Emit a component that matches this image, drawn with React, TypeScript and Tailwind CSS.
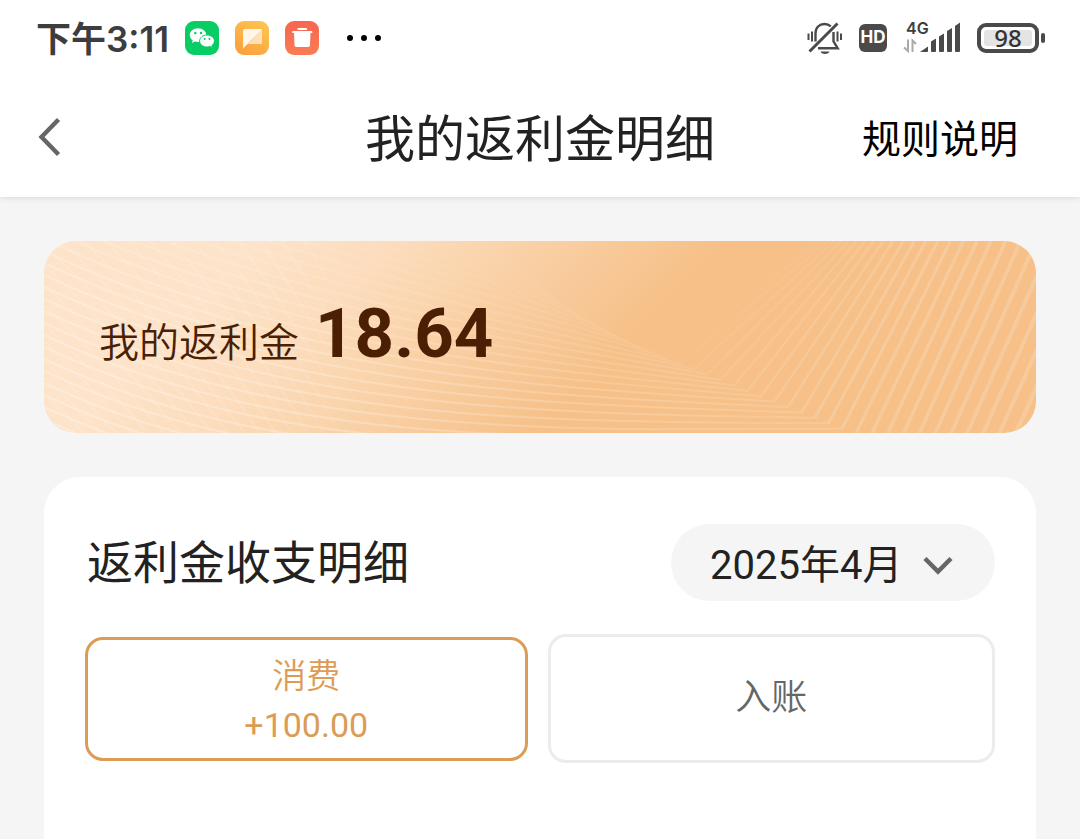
import React, { useState } from "react";

const CARD_W = 992;
const CARD_H = 192;

type Ray = { fan: string; sweep: string; strength: number; fade: number };

const rays: Ray[] = Array.from({ length: 40 }, (_, i) => {
  const k = i - 8;
  const vx = 609 + 13.5 * k;
  const vy = 112 + 5.4 * k;
  const topX = 773 + 5.02 * k + 0.258 * k * k;
  const leftY = 70 + 12 * (k - 13);
  const midY = 181 + 9 * (k - 13);
  return {
    fan: k >= 0 ? `M${vx} ${vy}L${topX} 0` : "",
    sweep: `M${vx} ${vy}C${496} ${midY} ${236} ${leftY + 112} 0 ${leftY}`,
    strength: Math.max(0.03, Math.min(0.17, 0.04 + k * 0.01)),
    fade: Math.max(0.15, Math.min(1, 0.4 + k * 0.06)),
  };
});

const crossings: string[] = Array.from({ length: 22 }, (_, j) => {
  const x = -180 + j * 22;
  return `M${x} 0Q${x + 110 - j * 3} 80 ${x + 220 - j * 6} 192`;
});

function CardPattern() {
  return (
    <svg
      className="absolute inset-0 h-full w-full"
      viewBox={`0 0 ${CARD_W} ${CARD_H}`}
      preserveAspectRatio="none"
      aria-hidden="true"
    >
      <defs>
        <linearGradient id="base" gradientUnits="userSpaceOnUse" x1="110" y1="110" x2="343" y2="343">
          <stop offset="0" stopColor="#fde3c9" />
          <stop offset="0.29" stopColor="#fcdcbb" />
          <stop offset="0.5" stopColor="#fad4ac" />
          <stop offset="0.72" stopColor="#f8cb9c" />
          <stop offset="1" stopColor="#f6c088" />
        </linearGradient>
        <linearGradient id="sweep" gradientUnits="userSpaceOnUse" x1="0" y1="0" x2="800" y2="0">
          <stop offset="0" stopColor="#fff" stopOpacity="0.26" />
          <stop offset="0.45" stopColor="#fff" stopOpacity="0.22" />
          <stop offset="1" stopColor="#fff" stopOpacity="0.13" />
        </linearGradient>
        <linearGradient id="cross" gradientUnits="userSpaceOnUse" x1="0" y1="0" x2="320" y2="0">
          <stop offset="0" stopColor="#fff" stopOpacity="0.1" />
          <stop offset="0.7" stopColor="#fff" stopOpacity="0.12" />
          <stop offset="1" stopColor="#fff" stopOpacity="0.03" />
        </linearGradient>
      </defs>
      <rect width={CARD_W} height={CARD_H} fill="url(#base)" />
      <g fill="none">
        {rays.map((r, i) => (
          <path key={`s${i}`} d={r.sweep} stroke="url(#sweep)" strokeWidth="2" opacity={r.fade} />
        ))}
        {crossings.map((d, i) => (
          <path key={`c${i}`} d={d} stroke="url(#cross)" strokeWidth="2" />
        ))}
        {rays.map((r, i) => (
          <path
            key={`f${i}`}
            d={r.fan}
            stroke="#fff"
            strokeOpacity={r.strength}
            strokeWidth={1 + i * 0.1}
          />
        ))}
      </g>
    </svg>
  );
}

function WeChatIcon() {
  return (
    <svg className="size-[34px]" viewBox="0 0 34 34" aria-hidden="true">
      <rect width="34" height="34" rx="9" fill="#07cd64" />
      <path d="M13 7.2c-4.600 0-8.300 3-8.300 6.900 0 2.200 1.200 4 3 5.300l-.8 2.600 3-1.600c1 .3 2 .5 3.100.5 4.600 0 8.300-3 8.300-6.800s-3.700-6.900-8.300-6.900z" fill="#fff" />
      <circle cx="10.300" cy="12" r="1.200" fill="#07cd64" />
      <circle cx="16" cy="12" r="1.200" fill="#07cd64" />
      <path d="M22 14c4.100 0 7.400 2.700 7.400 6 0 1.900-1 3.500-2.600 4.600l.6 2.200-2.500-1.300c-.9.300-1.900.5-2.900.5-4.100 0-7.400-2.700-7.400-6s3.300-6 7.400-6z" fill="#fff" stroke="#07cd64" strokeWidth="1" />
      <circle cx="19.600" cy="18" r="1" fill="#07cd64" />
      <circle cx="24.500" cy="18" r="1" fill="#07cd64" />
    </svg>
  );
}

function NoteIcon() {
  return (
    <svg className="size-[34px]" viewBox="0 0 34 34" aria-hidden="true">
      <defs>
        <linearGradient id="note" x1="0.8" y1="0" x2="0.2" y2="1">
          <stop offset="0" stopColor="#fdc550" />
          <stop offset="1" stopColor="#fb9f3d" />
        </linearGradient>
      </defs>
      <rect width="34" height="34" rx="9" fill="url(#note)" />
      <path d="M27 8.500V21.500a1.500 1.500 0 0 1-1.500 1.500H13z" fill="#fff" fillOpacity="0.6" />
      <path d="M9.500 8H25.500a1.500 1.500 0 0 1 1.300.8L8 27.500V9.500A1.500 1.500 0 0 1 9.500 8z" fill="#fff6e8" />
    </svg>
  );
}

function TrashIcon() {
  return (
    <svg className="size-[34px]" viewBox="0 0 34 34" aria-hidden="true">
      <defs>
        <linearGradient id="trash" x1="0" y1="0" x2="0" y2="1">
          <stop offset="0" stopColor="#f8654f" />
          <stop offset="1" stopColor="#fa7c55" />
        </linearGradient>
      </defs>
      <rect width="34" height="34" rx="9" fill="url(#trash)" />
      <path d="M13.500 7h7.500a1 1 0 0 1 1 1v1h-9.500V8a1 1 0 0 1 1-1z" fill="#fff" />
      <path d="M8 10h18.500a.8.8 0 0 1 .8.800v1.200h-1.800l-.5 12.300a1.800 1.800 0 0 1-1.800 1.700H11.300a1.800 1.800 0 0 1-1.800-1.700L9 12H7.200v-1.200a.8.8 0 0 1 .8-.8z" fill="#fff" />
    </svg>
  );
}

function BellOffIcon() {
  return (
    <svg className="h-[34px] w-9" viewBox="0 0 36 34" fill="none" stroke="#4a4a4a" strokeWidth="2.400" aria-hidden="true">
      <path d="M8.500 20.500V12.500C8.500 6.500 12.300 3 17.500 3c2.500 0 4.700.9 6.300 2.400M26.500 11v9.500l4.200 6.700H11" />
      <path d="M30.500 2.500L2.500 30.500" strokeWidth="3" />
      <path d="M13.500 30.500h9c-1 1.800-2.600 2.500-4.500 2.500s-3.500-.7-4.500-2.500z" fill="#4a4a4a" stroke="none" />
      <path d="M1.500 12.500v6.500M5 10.500v10M30.500 10.500v10M34 12.500v6.500" strokeWidth="2" />
    </svg>
  );
}

function SignalIcon() {
  return (
    <div className="relative h-9 w-[58px]">
      <svg className="h-full w-full" viewBox="0 0 58 36" aria-hidden="true">
        <path d="M5 19.500V31L1 27.500M9.500 32V20.500L13 24" fill="none" stroke="#aaa" strokeWidth="2" />
        <g fill="#4a4a4a">
          <path d="M17 32l8-5.500V31a1 1 0 0 1-1 1z" />
          <path d="M28 21.500l5-3V31a1 1 0 0 1-1 1h-3a1 1 0 0 1-1-1z" />
          <path d="M36 16.500l5-3V31a1 1 0 0 1-1 1h-3a1 1 0 0 1-1-1z" />
          <path d="M44 11l5-3V31a1 1 0 0 1-1 1h-3a1 1 0 0 1-1-1z" />
          <path d="M52 6l5-3.500V31a1 1 0 0 1-1 1h-3a1 1 0 0 1-1-1z" />
        </g>
      </svg>
      <span className="absolute -top-0.5 left-[3px] font-[Inter,sans-serif] text-[16px] leading-5 font-semibold text-[#3d3d3d]">
        4G
      </span>
    </div>
  );
}

function StatusBar() {
  return (
    <div className="flex h-[76px] items-center justify-between pr-[35px] pl-9">
      <div className="flex items-center gap-4">
        <time className="pt-0.5 font-[Inter,'Noto_Sans_CJK_SC',sans-serif] text-[35px] leading-10 font-semibold text-[#3d3d3d]">下午3:11</time>
        <WeChatIcon />
        <NoteIcon />
        <TrashIcon />
        <div className="flex gap-2 pl-3">
          <span className="size-1.5 rounded-full bg-black" />
          <span className="size-1.5 rounded-full bg-black" />
          <span className="size-1.5 rounded-full bg-black" />
        </div>
      </div>
      <div className="flex items-center gap-4">
        <BellOffIcon />
        <span className="flex h-7 w-7 items-center justify-center rounded-md bg-[#4a4a4a] font-[Inter,sans-serif] text-[17px] font-bold text-white">HD</span>
        <SignalIcon />
        <div className="flex items-center gap-0.5">
          <div className="flex h-[30px] w-[62px] rounded-[9px] border-4 border-[#4a4a4a] p-[3px]">
            <span className="flex flex-1 items-center justify-center rounded-[3px] bg-[#e4e4e4] font-['Noto_Sans',sans-serif] text-[24px] leading-4 font-medium text-[#333]">98</span>
          </div>
          <span className="h-2.5 w-1 rounded-full bg-[#4a4a4a]" />
        </div>
      </div>
    </div>
  );
}

export default function App() {
  const [tab, setTab] = useState("out");
  const active = "border-[#dc9c55] text-[#dc9c55]";
  const idle = "border-[#ececee] text-[#666]";

  return (
    <div className="flex min-h-screen flex-col bg-[#f5f5f5] font-[Roboto,'Noto_Sans_CJK_SC',sans-serif] text-[#222]">
      <div className="bg-white shadow-[0_1px_6px_rgba(0,0,0,0.12)]">
        <StatusBar />
        <header className="grid h-[121px] grid-cols-[1fr_auto_1fr] items-center pr-[62px] pl-[38px]">
          <button type="button" aria-label="返回" className="justify-self-start">
            <svg className="h-10 w-6" viewBox="0 0 24 40" fill="none" stroke="#666" strokeWidth="4.400" aria-hidden="true">
              <path d="M20.500 2.500L3.500 20l17 17.500" />
            </svg>
          </button>
          <h1 className="-mr-6 pt-1.5 text-[50px] leading-[60px] font-normal">我的返利金明细</h1>
          <a href="#rules" className="justify-self-end pt-1.5 text-[39px] leading-[60px] text-black">规则说明</a>
        </header>
      </div>

      <main className="flex flex-1 flex-col gap-11 px-11 pt-11">
        <section className="relative overflow-hidden rounded-[32px]">
          <CardPattern />
          <div className="relative flex h-[192px] items-baseline gap-4 pt-[53px] pl-[55px] text-[#4a1f04]">
            <span className="text-[40px] leading-[80px] font-[350]">我的返利金</span>
            <strong className="text-[69px] leading-[80px] font-bold">18.64</strong>
          </div>
        </section>

        <section className="flex-1 rounded-t-[36px] bg-white px-[41px] pt-[47px] pb-10">
          <div className="flex items-center justify-between">
            <h2 className="pl-0.5 text-[46px] leading-[72px] font-normal">返利金收支明细</h2>
            <div className="relative">
              <select
                aria-label="月份"
                defaultValue="2025-04"
                className="h-[77px] w-[324px] appearance-none rounded-full bg-[#f5f5f5] pt-1.5 pl-[39px] text-[40px] leading-[56px] text-[#222] outline-none"
              >
                <option value="2025-04">2025年4月</option>
                <option value="2025-03">2025年3月</option>
              </select>
              <svg
                className="pointer-events-none absolute top-8 right-[41px] h-5 w-8"
                viewBox="0 0 32 20"
                fill="none"
                stroke="#666"
                strokeWidth="4.500"
                aria-hidden="true"
              >
                <path d="M3 2.500L16 15.500L29 2.500" />
              </svg>
            </div>
          </div>

          <div className="mt-[33px] grid grid-cols-[443fr_448fr] items-center gap-5">
            <button
              type="button"
              onClick={() => setTab("out")}
              className={`flex flex-col items-center rounded-[18px] border-3 pt-3 pb-2 text-[34px] leading-[49px] ${tab === "out" ? active : idle}`}
            >
              <span className="font-[350]">消费</span>
              <span>+100.00</span>
            </button>
            <button
              type="button"
              onClick={() => setTab("in")}
              className={`rounded-[18px] border-3 py-[38px] text-[36px] leading-[47px] font-[350] ${tab === "in" ? active : idle}`}
            >
              入账
            </button>
          </div>
        </section>
      </main>
    </div>
  );
}
